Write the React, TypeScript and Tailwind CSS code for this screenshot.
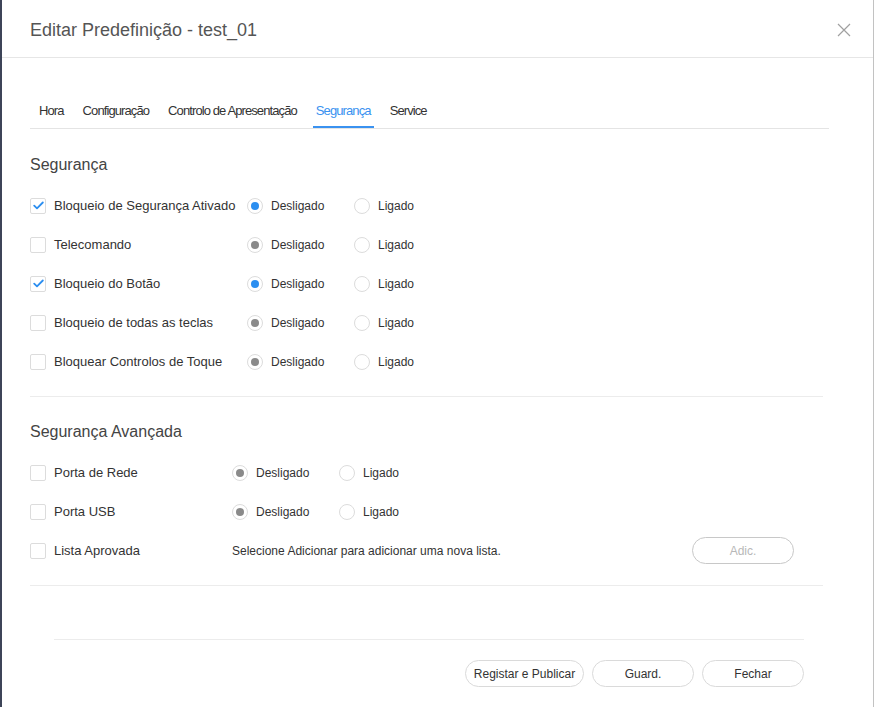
import type { ReactNode } from "react";

type Row = {
  label: string;
  checked: boolean;
  active: boolean;
};

const securityRows: Row[] = [
  { label: "Bloqueio de Segurança Ativado", checked: true, active: true },
  { label: "Telecomando", checked: false, active: false },
  { label: "Bloqueio do Botão", checked: true, active: true },
  { label: "Bloqueio de todas as teclas", checked: false, active: false },
  { label: "Bloquear Controlos de Toque", checked: false, active: false },
];

const tabs = ["Hora", "Configuração", "Controlo de Apresentação", "Segurança", "Service"];

function Checkbox({ checked }: { checked: boolean }) {
  return (
    <span className="flex h-4 w-4 shrink-0 items-center justify-center rounded-[2px] border border-[#dcdcdc] bg-white">
      {checked && (
        <svg width="11" height="9" viewBox="0 0 11 9" fill="none">
          <path d="M1.2 4.6 L4 7.3 L9.8 1.5" stroke="#2b8ef0" strokeWidth="1.8" strokeLinecap="round" strokeLinejoin="round" />
        </svg>
      )}
    </span>
  );
}

function Radio({ dot }: { dot?: "blue" | "gray" }) {
  return (
    <span className="flex h-4 w-4 shrink-0 items-center justify-center rounded-full border border-[#dcdcdc] bg-white">
      {dot === "blue" && <span className="h-2 w-2 rounded-full bg-[#2b8ef0]" />}
      {dot === "gray" && <span className="h-2 w-2 rounded-full bg-[#8a8a8a]" />}
    </span>
  );
}

function RadioPair({ active }: { active: boolean }) {
  return (
    <div className="flex items-center text-[12px]">
      <div className="flex w-[107px] items-center gap-2">
        <Radio dot={active ? "blue" : "gray"} />
        <span>Desligado</span>
      </div>
      <div className="flex items-center gap-2">
        <Radio />
        <span>Ligado</span>
      </div>
    </div>
  );
}

function OptionRow({ label, checked, labelWidth, children }: { label: string; checked: boolean; labelWidth: string; children: ReactNode }) {
  return (
    <div className="flex h-[39px] items-center">
      <div className={`flex items-center gap-2 ${labelWidth}`}>
        <Checkbox checked={checked} />
        <span>{label}</span>
      </div>
      {children}
    </div>
  );
}

function PillButton({ label, className }: { label: string; className: string }) {
  return (
    <button className={`flex h-[27px] items-center justify-center rounded-full border border-[#dadada] bg-white text-[12px] text-[#333] ${className}`}>
      {label}
    </button>
  );
}

export default function App() {
  return (
    <div className="flex h-[707px] w-[874px] bg-white font-['Liberation_Sans',Arial,sans-serif] text-[13px] text-[#333]">
      <div className="w-[2px] bg-[#3d4458]" />
      <div className="flex flex-1 flex-col border-r border-[#c2c2c2]">
        <div className="flex h-[58px] shrink-0 items-center justify-between border-b border-[#e6e6e6] pl-[28px] pr-[22px] pt-[3px]">
          <h1 className="text-[18px] text-[#555]">Editar Predefinição - test_01</h1>
          <svg width="14" height="14" viewBox="0 0 14 14" fill="none">
            <path d="M1 1 L13 13 M13 1 L1 13" stroke="#a0a0a0" strokeWidth="1.2" />
          </svg>
        </div>

        <div className="ml-[28px] mt-[34px] flex w-[799px] gap-[13px] border-b border-[#e4e4e4] pl-[6px]">
          {tabs.map((tab) => (
            <div
              key={tab}
              className={`flex h-[36px] items-center border-b-2 px-[3px] pt-[4px] tracking-[-0.9px] ${
                tab === "Segurança" ? "border-[#3a92f0] text-[#3a92f0]" : "border-transparent text-[#333]"
              }`}
            >
              {tab}
            </div>
          ))}
        </div>

        <div className="ml-[28px] w-[793px] border-b border-[#ececec] pb-[15px]">
          <h2 className="mt-[26px] text-[16px] leading-[20px] text-[#444]">Segurança</h2>
          <div className="mt-[11px]">
            {securityRows.map((row) => (
              <OptionRow key={row.label} label={row.label} checked={row.checked} labelWidth="w-[217px]">
                <RadioPair active={row.active} />
              </OptionRow>
            ))}
          </div>
        </div>

        <div className="ml-[28px] w-[793px] border-b border-[#ececec] pb-[15px]">
          <h2 className="mt-[25px] text-[16px] leading-[20px] text-[#444]">Segurança Avançada</h2>
          <div className="mt-[11px]">
            <OptionRow label="Porta de Rede" checked={false} labelWidth="w-[202px]">
              <RadioPair active={false} />
            </OptionRow>
            <OptionRow label="Porta USB" checked={false} labelWidth="w-[202px]">
              <RadioPair active={false} />
            </OptionRow>
            <OptionRow label="Lista Aprovada" checked={false} labelWidth="w-[202px]">
              <span className="flex-1 text-[12px]">Selecione Adicionar para adicionar uma nova lista.</span>
              <button className="mr-[29px] flex h-[27px] w-[102px] items-center justify-center rounded-full border border-[#c8c8c8] bg-white text-[12px] text-[#b8b8b8]">
                Adic.
              </button>
            </OptionRow>
          </div>
        </div>

        <div className="ml-[52px] mt-[53px] w-[750px] border-t border-[#ececec]">
          <div className="mt-[20px] flex justify-end gap-2">
            <PillButton label="Registar e Publicar" className="w-[119px]" />
            <PillButton label="Guard." className="w-[102px]" />
            <PillButton label="Fechar" className="w-[102px]" />
          </div>
        </div>
      </div>
    </div>
  );
}
